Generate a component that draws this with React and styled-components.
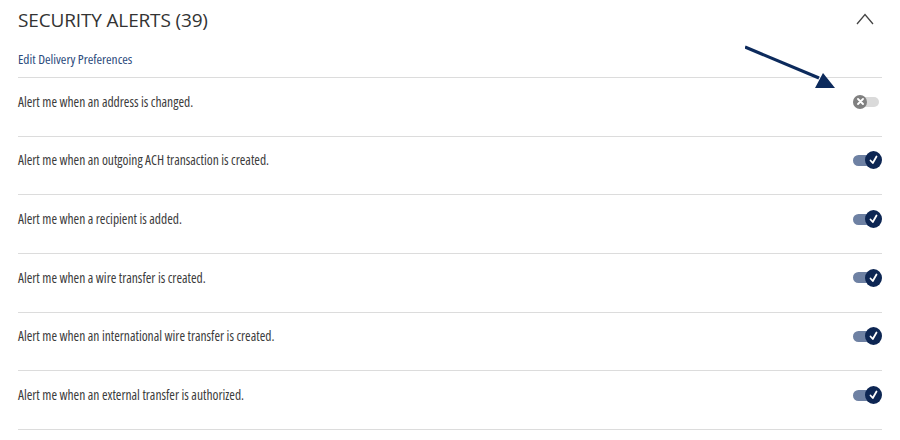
import styled, { createGlobalStyle } from "styled-components"

const Global = createGlobalStyle`
    body{
        margin: 0;
        background: #fff;
        font-family: "Open Sans", "Liberation Sans", sans-serif;
    }
`

const Panel = styled.section`
    position: relative;
    width: 864px;
    margin: 0 18px;
`

const Header = styled.div`
    height: 40px;
    display: flex;
    align-items: center;
    justify-content: space-between;

    h2{
        margin: 0;
        font-size: 19px;
        font-weight: 400;
        color: #333;
        letter-spacing: -0.15px;
    }
`

const Chevron = styled.button`
    background: transparent;
    border: none;
    padding: 0;
    margin-right: 6px;
    width: 20px;
    height: 14px;
    display: flex;
    cursor: pointer;
`

const LinkRow = styled.div`
    height: 37px;
    display: flex;
    align-items: center;
    border-bottom: 1px solid #dcdcdc;

    a{
        font-size: 13.4px;
        font-stretch: 75%;
        color: #2c4a7c;
        text-decoration: none;
        margin-top: 1px;
    }
`

const Row = styled.div`
    height: 58.67px;
    box-sizing: border-box;
    padding-bottom: 10px;
    display: flex;
    align-items: center;
    justify-content: space-between;
    border-bottom: 1px solid #dcdcdc;

    span{
        font-size: 13.5px;
        font-stretch: 75%;
        color: #3c3c3c;
    }
`

const Toggle = styled.div`
    position: relative;
    width: 29px;
    height: 18px;
    display: flex;
    align-items: center;

    &::before{
        content: "";
        position: absolute;
        left: 0;
        width: ${p => p.$on ? "24px" : "26px"};
        height: ${p => p.$on ? "11px" : "10px"};
        border-radius: 6px;
        background: ${p => p.$on ? "#6e81a3" : "#dadada"};
    }
`

const Knob = styled.div`
    position: absolute;
    top: ${p => p.$on ? "0" : "2px"};
    left: ${p => p.$on ? "12px" : "0"};
    width: ${p => p.$on ? "17px" : "14px"};
    height: ${p => p.$on ? "18px" : "14px"};
    border-radius: 50%;
    background: ${p => p.$on ? "#0d2653" : "#808080"};
    display: flex;
    align-items: center;
    justify-content: center;
`

const Arrow = styled.svg`
    position: absolute;
    left: 727px;
    top: 40px;
    pointer-events: none;
`

const alerts = [
    { text: "Alert me when an address is changed.", on: false },
    { text: "Alert me when an outgoing ACH transaction is created.", on: true },
    { text: "Alert me when a recipient is added.", on: true },
    { text: "Alert me when a wire transfer is created.", on: true },
    { text: "Alert me when an international wire transfer is created.", on: true },
    { text: "Alert me when an external transfer is authorized.", on: true },
]

const Switch = ({ on }) => (
    <Toggle $on={on}>
        <Knob $on={on}>
            {on ? (
                <svg width="9" height="10" viewBox="0 0 9 10">
                    <path d="M1.5 5.5 L3.8 8 L7.5 1.5" fill="none" stroke="#fff" strokeWidth="1.8" strokeLinecap="round" strokeLinejoin="round" />
                </svg>
            ) : (
                <svg width="7" height="7" viewBox="0 0 7 7">
                    <path d="M1 1 L6 6 M6 1 L1 6" stroke="#fff" strokeWidth="1.8" strokeLinecap="round" />
                </svg>
            )}
        </Knob>
    </Toggle>
)

const App = () => {
    return <>
        <Global />
        <Panel>
            <Header>
                <h2>SECURITY ALERTS (39)</h2>
                <Chevron aria-label="collapse">
                    <svg width="18" height="12" viewBox="0 0 18 12">
                        <path d="M1 11 L9 1.5 L17 11" fill="none" stroke="#444" strokeWidth="1.3" />
                    </svg>
                </Chevron>
            </Header>
            <LinkRow>
                <a href="#">Edit Delivery Preferences</a>
            </LinkRow>
            {alerts.map(a => (
                <Row key={a.text}>
                    <span>{a.text}</span>
                    <Switch on={a.on} />
                </Row>
            ))}
            <Arrow width="120" height="60" viewBox="0 0 120 60">
                <line x1="0" y1="7" x2="74" y2="38" stroke="#0c2a5c" strokeWidth="3.2" />
                <polygon points="78,33 70,48 90,48" fill="#0c2a5c" />
            </Arrow>
        </Panel>
    </>
}

export default App
